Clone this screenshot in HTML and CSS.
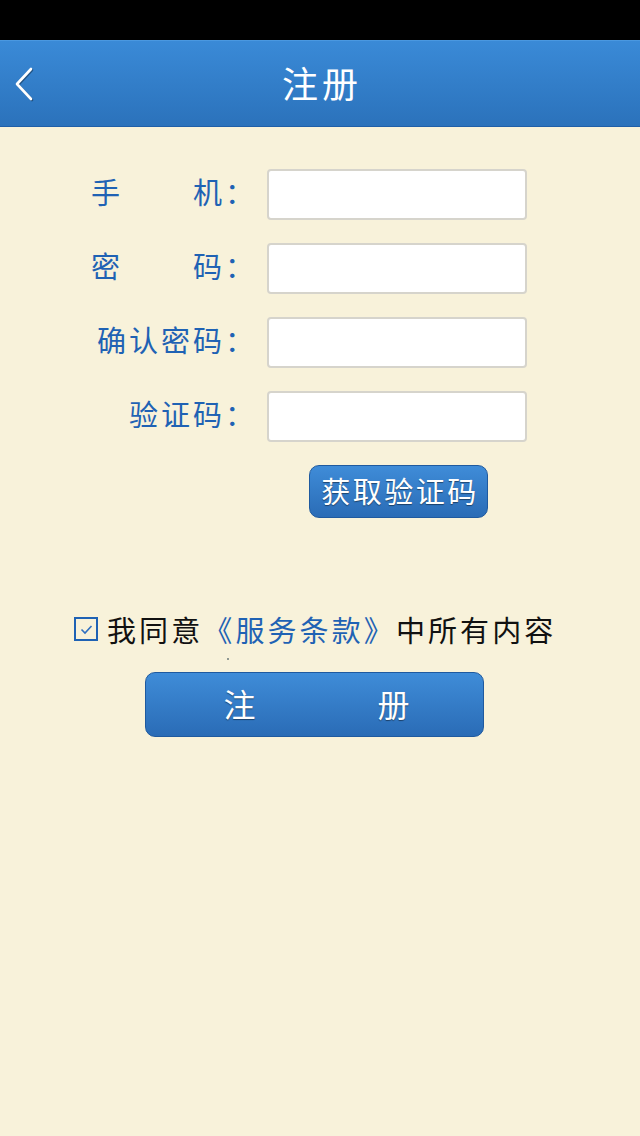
FILE: index.html
```html
<!DOCTYPE html>
<html lang="zh-CN">
<head>
  <meta charset="UTF-8" />
  <meta name="viewport" content="width=device-width, initial-scale=1.0" />
  <title>注册</title>
  <link rel="stylesheet" href="styles.css">
</head>
<body>
  <div class="status-bar"></div>
  <header class="nav-bar">
    <button class="back-button" aria-label="返回">
      <svg width="20" height="34" viewBox="0 0 20 34">
        <polyline points="17,2 3,17 17,32" fill="none" stroke="#fff" stroke-width="2.6" stroke-linecap="round" stroke-linejoin="round" />
      </svg>
    </button>
    <h1>注册</h1>
  </header>

  <main class="container">
    <form class="register-form">
      <div class="form-row">
        <label class="field-label"><span class="spread">手机</span><span class="colon">：</span></label>
        <input type="tel" class="field-input" />
      </div>
      <div class="form-row">
        <label class="field-label"><span class="spread">密码</span><span class="colon">：</span></label>
        <input type="password" class="field-input" />
      </div>
      <div class="form-row">
        <label class="field-label"><span>确认密码</span><span class="colon">：</span></label>
        <input type="password" class="field-input" />
      </div>
      <div class="form-row">
        <label class="field-label"><span>验证码</span><span class="colon">：</span></label>
        <input type="text" class="field-input" />
      </div>
      <div class="code-row">
        <button type="button" class="blue-button code-button">获取验证码</button>
      </div>

      <div class="agree-row">
        <span class="checkbox">
          <svg width="13" height="11" viewBox="0 0 13 11">
            <polyline points="1.5,5.5 5,9 11.5,2" fill="none" stroke="#2f6fc0" stroke-width="1.6" />
          </svg>
        </span>
        <span class="agree-text">我同意<a class="terms-link">《服务条款》</a>中所有内容</span>
      </div>
      <span class="speck"></span>

      <button type="button" class="blue-button submit-button"><span>注</span><span>册</span></button>
    </form>
  </main>
</body>
</html>
```

FILE: styles.css
```css
* {
  box-sizing: border-box;
}
body {
  margin: 0;
  background-color: #f8f2da;
  font-family: "Noto Sans CJK SC", "Noto Sans", sans-serif;
  min-height: 1136px;
}
.status-bar {
  height: 40px;
  background: #000;
}
.nav-bar {
  position: relative;
  height: 87px;
  background: linear-gradient(#3a8ad7, #2b72bb);
  border-top: 1px solid #4a98e0;
  border-bottom: 1px solid #1f5fa8;
  display: flex;
  align-items: center;
  justify-content: center;
}
.nav-bar h1 {
  margin: 0 0 4px;
  color: #fff;
  font-size: 36px;
  font-weight: normal;
  letter-spacing: 4px;
  padding-left: 4px;
}
.back-button {
  position: absolute;
  left: 14px;
  top: 26px;
  background: none;
  border: none;
  padding: 0;
  filter: drop-shadow(1px 1px 0 rgba(0,0,0,0.35));
}
.container {
  padding-top: 42px;
}
.register-form {
  display: flex;
  flex-direction: column;
}
.form-row {
  display: flex;
  align-items: center;
  height: 51px;
  margin-bottom: 23px;
}
.field-label {
  width: 267px;
  padding-right: 18px;
  padding-bottom: 8px;
  line-height: 34px;
  display: flex;
  justify-content: flex-end;
  align-items: center;
  color: #1f62b4;
  font-size: 29px;
  letter-spacing: 3px;
}
.field-label .spread {
  width: 134px;
  text-align: justify;
  text-align-last: justify;
}
.field-label .colon {
  letter-spacing: 0;
  width: 24px;
  text-align: left;
}
.field-input {
  width: 260px;
  height: 51px;
  border: 2px solid #d6d4cc;
  border-radius: 4px;
  background: #fff;
  font-size: 24px;
  padding: 0 10px;
}
.code-row {
  padding-left: 309px;
}
.blue-button {
  background: linear-gradient(#3f8cd8, #2a6cb6);
  border: 1px solid #1f5a9f;
  color: #fff;
  font-family: "Noto Sans CJK SC", "Noto Sans", sans-serif;
  text-shadow: 0 1px 1px rgba(0,0,0,0.45);
  cursor: pointer;
}
.code-button {
  width: 179px;
  height: 53px;
  border-radius: 10px;
  font-size: 29px;
  letter-spacing: 2.5px;
  padding: 0 0 3px 3px;
}
.agree-row {
  margin-top: 90px;
  display: flex;
  align-items: center;
  padding-left: 74px;
}
.checkbox {
  width: 24px;
  height: 24px;
  border: 2px solid #1f62b4;
  display: flex;
  align-items: center;
  justify-content: center;
  margin-right: 9px;
}
.agree-text {
  font-size: 29px;
  color: #111;
  letter-spacing: 3.1px;
}
.terms-link {
  color: #1f62b4;
}
.speck {
  display: block;
  width: 2px;
  height: 2px;
  margin: 8px 0 0 227px;
  background: #6d7a7a;
  border-radius: 1px;
}
.submit-button {
  align-self: flex-start;
  margin: 12px 0 0 145px;
  width: 339px;
  height: 65px;
  border-radius: 10px;
  font-size: 32px;
  display: flex;
  align-items: center;
  justify-content: center;
  gap: 122px;
  padding: 0 0 4px 4px;
}
```
